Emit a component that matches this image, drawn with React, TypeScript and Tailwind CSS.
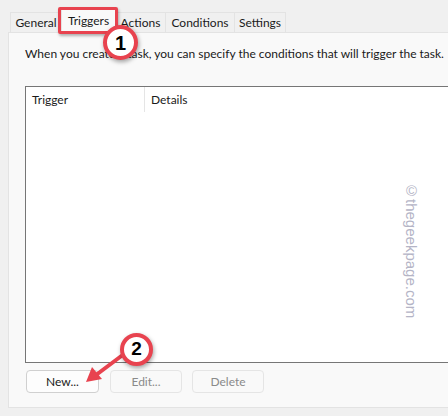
export default function App() {
    const tabs = [
        { label: "General", w: "w-[52px]" },
        { label: "Triggers", w: "w-[55px]", active: true },
        { label: "Actions", w: "w-[51px]" },
        { label: "Conditions", w: "w-[70px]" },
        { label: "Settings", w: "w-[52px]" },
    ];

    return (
        <div
            className="relative w-[448px] h-[416px] overflow-hidden bg-[#f0f0f0] pt-[12px] text-[12px] text-[#1a1a1a]"
            style={{ fontFamily: 'Lato, "Noto Sans", sans-serif' }}
        >
            {/* Tab strip */}
            <div className="flex items-end h-[20px] ml-[10px]">
                {tabs.map((t) =>
                    t.active ? (
                        <div
                            key={t.label}
                            className={`${t.w} h-[25px] -mb-[1px] -ml-[1px] relative z-10 flex items-start justify-center pt-[3px] bg-[#f9f9f9] border border-b-0 border-[#e3e3e3]`}
                        >
                            {t.label}
                        </div>
                    ) : (
                        <div
                            key={t.label}
                            className={`${t.w} h-[20px] flex items-center justify-center bg-[#f0f0f0] border border-b-0 border-[#e3e3e3] -ml-[1px] first:ml-0`}
                        >
                            {t.label}
                        </div>
                    )
                )}
            </div>

            {/* Tab panel */}
            <div className="ml-[8px] w-[460px] h-[376px] bg-[#f9f9f9] border border-[#e3e3e3] px-[16px] pt-[12px]">
                <p className="leading-[18px] whitespace-nowrap">
                    When you create a task, you can specify the conditions that will trigger the task.
                </p>

                <div className="mt-[23px] w-[440px] h-[277px] bg-white border border-[#767676]">
                    <div className="flex h-[25px]">
                        <div className="w-[119px] pl-[6px] flex items-center border-r border-[#e5e5e5]">
                            Trigger
                        </div>
                        <div className="pl-[6px] flex items-center">Details</div>
                    </div>
                </div>

                <div className="flex mt-[7px] ml-[1px]">
                    <button className="w-[73px] h-[23px] rounded-[4px] border border-[#d0d0d0] bg-[#fdfdfd] text-[#1a1a1a]">
                        New...
                    </button>
                    <button className="ml-[11px] w-[72px] h-[23px] rounded-[4px] border border-[#e5e5e5] bg-[#f9f9f9] text-[#8a8a8a]">
                        Edit...
                    </button>
                    <button className="ml-[10px] w-[72px] h-[23px] rounded-[4px] border border-[#e5e5e5] bg-[#f9f9f9] text-[#8a8a8a]">
                        Delete
                    </button>
                </div>
            </div>

            {/* Watermark */}
            <div
                className="absolute left-[403px] top-[182px] text-[15px] leading-[16px] text-[#b4b4c6]"
                style={{ writingMode: "vertical-rl", fontFamily: '"Liberation Sans", Arial, sans-serif' }}
            >
                ©thegeekpage.com
            </div>

            {/* Callout 1 */}
            <div className="absolute left-[58px] top-[7px] w-[60px] h-[27px] border-[3px] border-[#e8434f] rounded-[2px] shadow-[1px_2px_3px_rgba(0,0,0,0.3)] z-20" />
            <div
                className="absolute left-[103px] top-[25px] w-[35px] h-[35px] rounded-full bg-white border-[4px] border-[#e8434f] shadow-[1px_2px_4px_rgba(0,0,0,0.35)] z-30 flex items-center justify-center text-[20px] font-bold text-black"
                style={{ fontFamily: '"Liberation Sans", Arial, sans-serif' }}
            >
                1
            </div>

            {/* Callout 2 */}
            <svg className="absolute left-0 top-0 z-20" width="448" height="416" viewBox="0 0 448 416">
                <line x1="124" y1="354" x2="96" y2="375" stroke="#e8434f" strokeWidth="4" strokeLinecap="round" />
                <polygon points="86,382 92,367 102,379" fill="#e8434f" />
            </svg>
            <div
                className="absolute left-[120px] top-[333px] w-[33px] h-[33px] rounded-full bg-white border-[4px] border-[#e8434f] shadow-[1px_2px_4px_rgba(0,0,0,0.35)] z-30 flex items-center justify-center text-[19px] font-bold text-black"
                style={{ fontFamily: '"Liberation Sans", Arial, sans-serif' }}
            >
                2
            </div>
        </div>
    );
}
